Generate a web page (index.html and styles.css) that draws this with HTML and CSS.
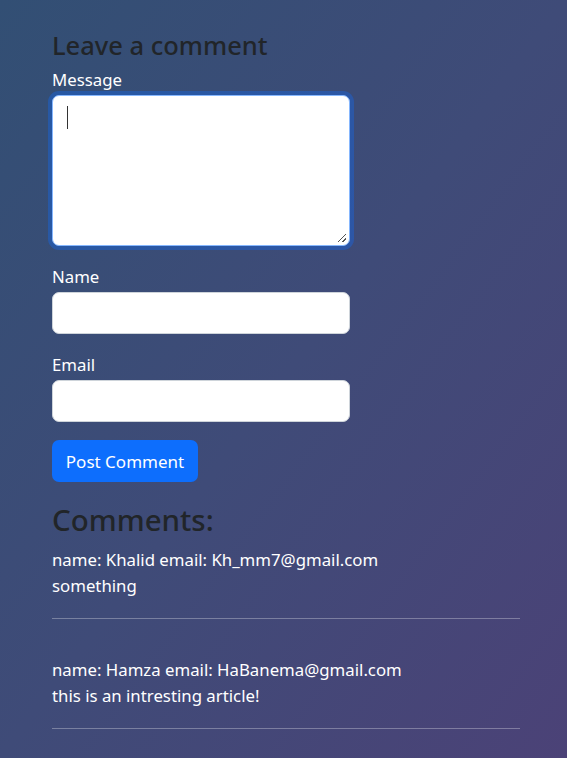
FILE: index.html
```html
<!DOCTYPE html>
<html>
<head>
<meta charset="utf-8">
<link rel="stylesheet" href="styles.css">
</head>
<body>
<main class="page">
  <h3 class="title">Leave a comment</h3>
  <form class="form">
    <div class="field">
      <label class="label">Message</label>
      <div class="textarea focused"><span class="caret"></span><span class="grip"></span></div>
    </div>
    <div class="field">
      <label class="label">Name</label>
      <div class="input"></div>
    </div>
    <div class="field">
      <label class="label">Email</label>
      <div class="input"></div>
    </div>
    <button type="button" class="btn">Post Comment</button>
  </form>
  <h2 class="comments-title">Comments:</h2>
  <section class="comments">
    <div class="comment">
      <p>name: Khalid email: Kh_mm7@gmail.com<br>something</p>
    </div>
    <hr class="sep">
    <div class="comment second">
      <p>name: Hamza email: HaBanema@gmail.com<br>this is an intresting article!</p>
    </div>
    <hr class="sep">
  </section>
</main>
</body>
</html>
```
FILE: styles.css
```css
html, body {
  margin: 0;
  height: 100%;
}
body {
  background: linear-gradient(to bottom right, #324f74 0%, #3f4b78 50%, #4b4277 100%);
  font-family: "Noto Sans", "Open Sans", sans-serif;
  font-size: 16.8px;
  line-height: 26.4px;
  color: #fff;
  overflow: hidden;
}
.page {
  padding: 29px 0 0 52px;
  width: 468px;
}
.title {
  margin: 0 0 6px;
  font-size: 25.5px;
  line-height: 32px;
  font-weight: 500;
  color: #212529;
}
.form {
  display: flex;
  flex-direction: column;
}
.field {
  display: flex;
  flex-direction: column;
  margin-bottom: 18px;
}
.label {
  line-height: 26px;
  margin-bottom: 2px;
}
.textarea, .input {
  box-sizing: border-box;
  width: 298px;
  background: #fff;
  border: 1px solid #ced4da;
  border-radius: 7px;
  position: relative;
}
.textarea {
  height: 151px;
}
.textarea.focused {
  border-color: #86b7fe;
  box-shadow: 0 0 0 4px rgba(13, 110, 253, 0.35);
}
.caret {
  position: absolute;
  left: 14px;
  top: 10px;
  width: 1px;
  height: 23px;
  background: #333;
}
.grip {
  position: absolute;
  right: 3px;
  bottom: 3px;
  width: 8px;
  height: 8px;
  background:
    linear-gradient(135deg, transparent 45%, #555 45%, #555 55%, transparent 55%),
    linear-gradient(135deg, transparent 75%, #555 75%, #555 85%, transparent 85%);
}
.input {
  height: 42px;
}
.btn {
  align-self: flex-start;
  width: 146px;
  height: 42px;
  border: none;
  border-radius: 7px;
  background: #0d6efd;
  color: #fff;
  font-family: inherit;
  font-size: 17px;
  padding: 0;
}
.comments-title {
  margin: 19px 0 8px;
  font-size: 29.5px;
  line-height: 38px;
  font-weight: 500;
  color: #212529;
}
.comment p {
  margin: 0 0 18px;
}
.sep {
  margin: 0;
  border: 0;
  border-top: 1px solid rgba(255, 255, 255, 0.3);
}
.second {
  padding-top: 38px;
}
```
